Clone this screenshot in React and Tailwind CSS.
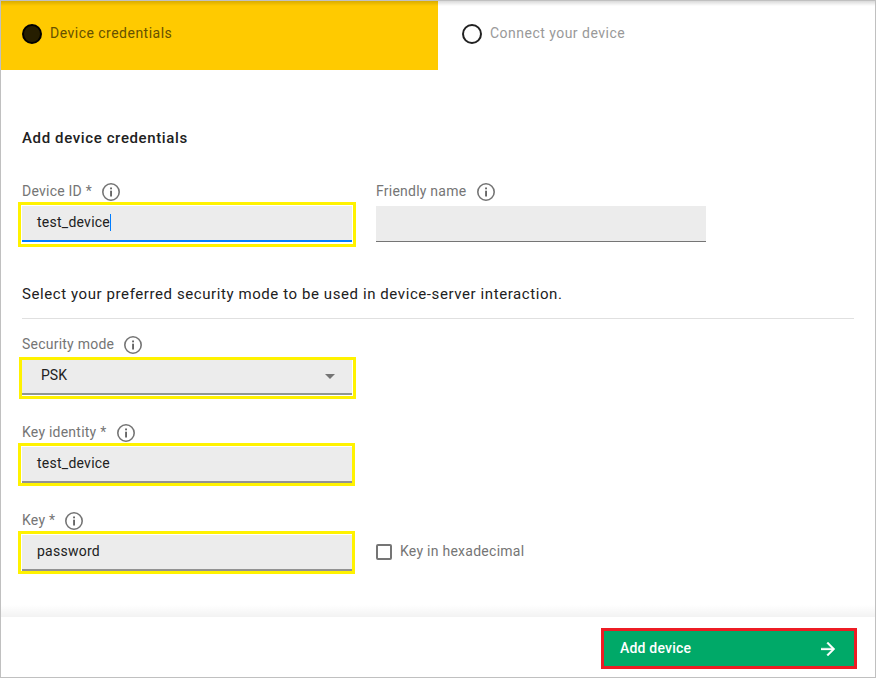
function InfoIcon() {
  return (
    <svg className="block h-[18px] w-[18px] shrink-0" viewBox="0 0 18 18" fill="none">
      <circle cx="9" cy="9" r="8.2" stroke="#757575" strokeWidth="1.6" />
      <rect x="8.1" y="4.5" width="1.9" height="1.8" fill="#666" />
      <rect x="8.1" y="7.7" width="1.9" height="5.8" fill="#666" />
    </svg>
  );
}

function Label({ text, width }) {
  return (
    <div className="flex h-[18px] items-start text-sm text-[#757575]">
      <span className={`${width} -mt-px whitespace-nowrap leading-[18px] tracking-[0.23px]`}>{text}</span>
      <InfoIcon />
    </div>
  );
}

export default function App() {
  return (
    <div
      className="flex h-[678px] w-[876px] flex-col overflow-hidden border border-[#c0c0c0] bg-white text-[#212121]"
      style={{ fontFamily: 'Roboto, "Liberation Sans", sans-serif' }}
    >
      <header className="relative flex h-[69px] shrink-0 text-sm tracking-[0.48px]">
        <div className="flex w-[437px] items-start bg-[#ffca00] pl-[21px] pt-[23px]">
          <span className="h-5 w-5 rounded-full border-2 border-black bg-[#261e00]" />
          <span className="ml-2 leading-[19px] text-[#665100]">Device credentials</span>
        </div>
        <div className="flex items-start pl-6 pt-[23px]">
          <span className="h-5 w-5 rounded-full border-2 border-[#212121]" />
          <span className="ml-2 leading-[19px] text-[#999]">Connect your device</span>
        </div>
        <div className="absolute inset-x-0 top-0 h-[5px] bg-gradient-to-b from-black/15 to-transparent" />
      </header>

      <main className="flex h-[547px] shrink-0 flex-col pl-[21px] pr-[21px]">
        <h1 className="mt-[57px] h-5 text-[15px] font-medium leading-[22px] tracking-[0.62px]">Add device credentials</h1>

        <div className="mt-[36px] flex">
          <div className="w-[354px]">
            <Label text="Device ID *" width="w-[80px]" />
            <div className="-ml-1 mt-px h-[45px] w-[338px] border-[3px] border-[#fff200] p-px">
              <div className="flex h-[36px] items-center border-b-2 border-[#007dff] bg-[#ececec] pl-[15px] text-sm tracking-[0.25px]">
                <span className="-mt-[3px] leading-[18px]">test_device</span>
                <span className="-mt-px h-[17px] w-px bg-[#007dff]" />
              </div>
            </div>
          </div>
          <div>
            <Label text="Friendly name" width="w-[101px]" />
            <div className="mt-[5px] h-[36px] w-[330px] border-b border-[#757575] bg-[#ececec]" />
          </div>
        </div>

        <p className="mt-[36px] h-5 text-[15px] leading-[22px] tracking-[0.585px]">
          Select your preferred security mode to be used in device-server interaction.
        </p>
        <div className="mt-[15px] h-px bg-[#e0e0e0]" />

        <div className="mt-[17px]">
          <Label text="Security mode" width="w-[102px]" />
          <div className="-ml-[3px] mt-[3px] h-[42px] w-[337px] border-[3px] border-[#fff200] pr-px">
            <div className="flex h-[35px] items-center justify-between border-b-2 border-[#8f9793] bg-[#ececec] pl-[19px] pr-[17px] text-sm">
              <span className="-mt-[4px] leading-[18px]">PSK</span>
              <svg className="h-[5px] w-[10px]" viewBox="0 0 10 5">
                <path d="M0 0h10L5 5z" fill="#757575" />
              </svg>
            </div>
          </div>
        </div>

        <div className="mt-[25px]">
          <Label text="Key identity *" width="w-[95px]" />
          <div className="-ml-1 mt-px h-[43px] w-[337px] border-[3px] border-[#fff200] pl-px pt-px">
            <div className="flex h-[36px] items-center border-b-2 border-[#929292] bg-[#ececec] pl-[15px] text-sm tracking-[0.25px]">
              <span className="-mt-[3px] leading-[18px]">test_device</span>
            </div>
          </div>
        </div>

        <div className="mt-[26px] flex">
          <div className="w-[354px]">
            <Label text="Key *" width="w-[43px]" />
            <div className="-ml-1 mt-px h-[43px] w-[337px] border-[3px] border-[#fff200] pl-px pt-px">
              <div className="flex h-[36px] items-center border-b-2 border-[#929292] bg-[#ececec] pl-[15px] text-sm tracking-[0.25px]">
                <span className="-mt-[3px] leading-[18px]">password</span>
              </div>
            </div>
          </div>
          <div className="mt-[32px] flex h-4 items-start">
            <span className="h-4 w-4 rounded-[2px] border-2 border-[#757575]" />
            <span className="-mt-px ml-2 text-sm leading-4 tracking-[0.26px] text-[#757575]">Key in hexadecimal</span>
          </div>
        </div>

        <div className="-mx-[21px] mt-auto h-[12px] bg-gradient-to-b from-transparent to-black/5" />
      </main>

      <footer className="flex flex-1 items-start justify-end pr-[18px] pt-[11px]">
        <button className="flex h-[41px] w-[256px] items-center justify-between border-[3px] border-[#ed1c24] bg-[#00a968] pl-4 pr-[19px] text-sm font-medium tracking-[0.2px] text-white">
          <span className="-mt-[2px]">Add device</span>
          <svg className="h-[14px] w-[14px]" viewBox="4 4 16 16">
            <path d="M12 4l-1.41 1.41L16.17 11H4v2h12.17l-5.58 5.59L12 20l8-8z" fill="white" stroke="white" strokeWidth="0.4" />
          </svg>
        </button>
      </footer>
    </div>
  );
}
